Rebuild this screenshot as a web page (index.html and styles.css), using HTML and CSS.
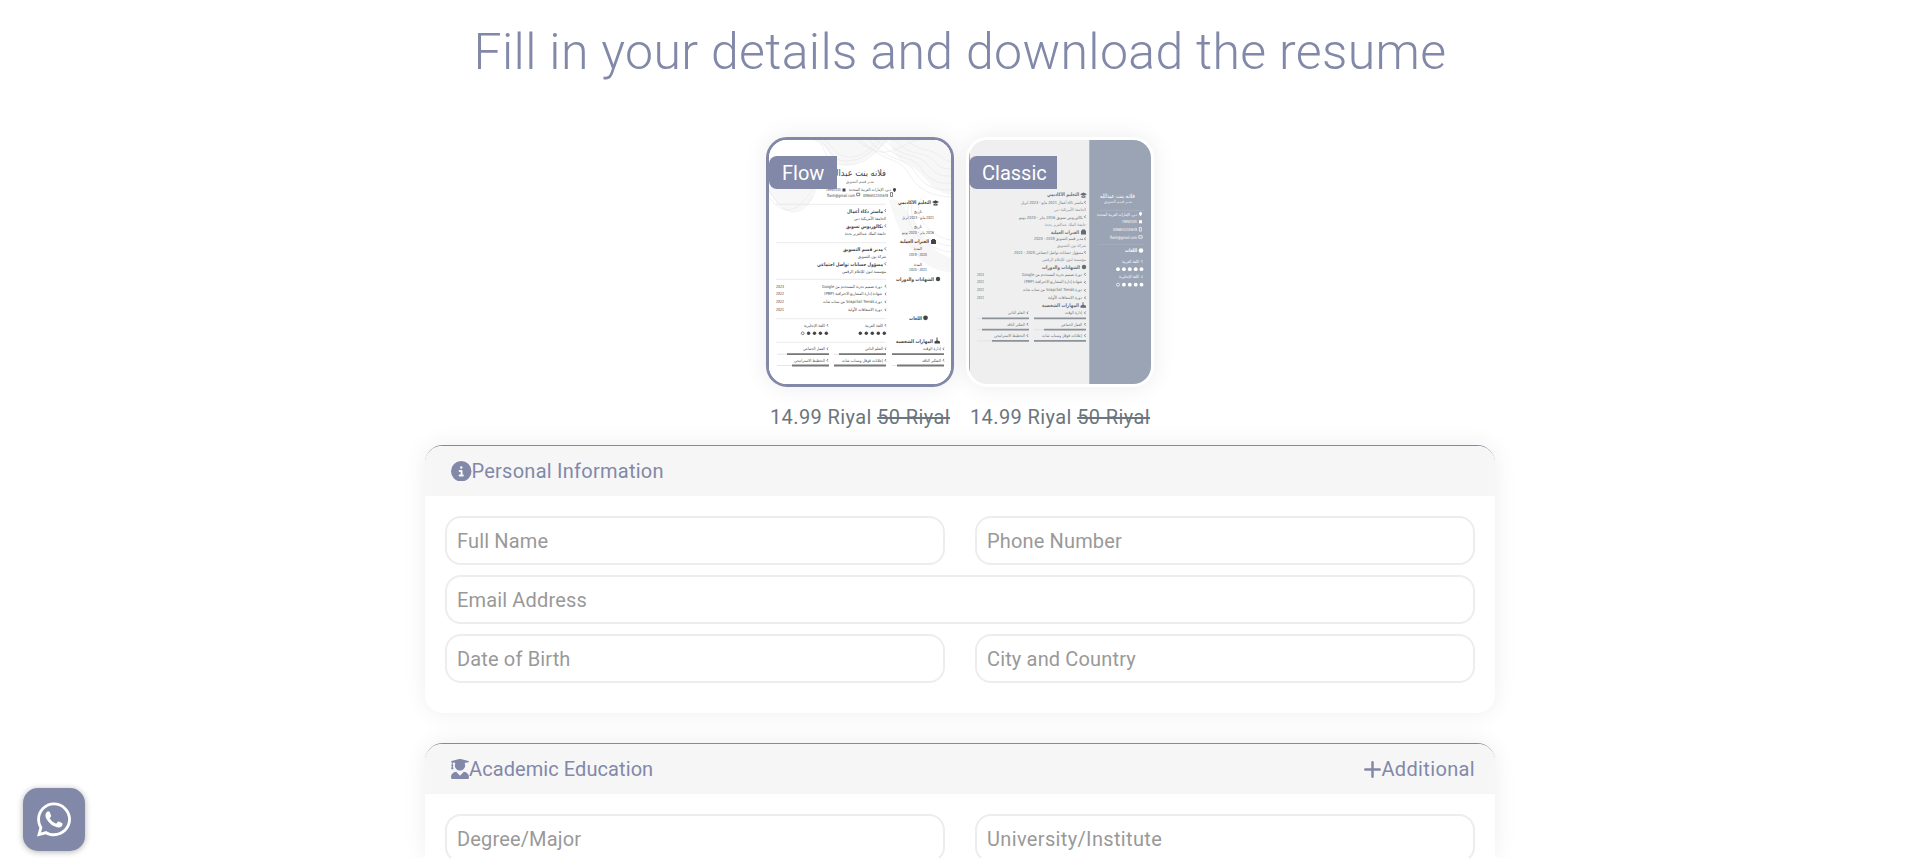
FILE: index.html
```html
<!DOCTYPE html>
<html lang="en">
<head>
<meta charset="utf-8">
<title>Resume Builder</title>
<link rel="stylesheet" href="styles.css">
</head>
<body>
<main class="page">
  <h1 class="title">Fill in your details and download the resume</h1>

  <section class="templates">
    <article class="template">
      <div class="thumb thumb-active">
        <span class="badge badge-flow">Flow</span>
        <svg class="sheet" viewBox="0 0 182 244">
          <rect width="182" height="244" fill="#fff"/>
          <path d="M48 0C60 8 62 22 76 25S112 8 120 0ZM120 0C130 30 140 20 152 34S168 52 182 55V0ZM0 52C18 82 36 70 44 58S50 30 0 48ZM120 60C138 52 150 110 182 118V132C160 132 136 116 120 60Z" fill="#f7f7f8"/>
          <g fill="none" stroke="#e9e9eb" stroke-width=".7">
            <path d="M46 0C60 6 52 24 76 25S112 6 116 0M50 0C62 7 60 21 78 21S108 6 112 0M56 0C64 7 66 16 80 17S104 6 108 0M88 0C108 16 118 14 134 6S150 0 152 0M92 0C116 24 130 16 140 34S166 56 182 57M100 0C122 24 136 16 146 32S168 50 182 50M108 0C128 22 142 14 152 28S170 44 182 43M116 0C134 20 148 12 158 24S172 36 182 36M126 0C142 18 154 10 164 20S174 28 182 29M138 0C150 12 160 8 168 14S176 20 182 22M0 50C18 84 38 72 43 56M0 57C18 82 34 68 50 38M140 62C132 90 160 110 182 112M144 60C136 84 160 104 182 106M152 58C142 78 164 98 182 100"/>
          </g>
          <circle cx="103" cy="39" r="19" fill="#fff"/>
          <path d="M7 64.300H117M7 102.700H117M7 139.300H117M7 178.700H117M7 202.300H117" stroke="#e6e6e6" stroke-width=".8"/>
          <g class="ink">
            <text class="name" x="117" y="36" textLength="57" lengthAdjust="spacingAndGlyphs">فلانه بنت عبدالله</text>
            <text class="soft" x="105" y="42.500" textLength="28" lengthAdjust="spacingAndGlyphs">مدير قسم التسويق</text>
            <text x="122" y="51" textLength="42" lengthAdjust="spacingAndGlyphs">دبي، الإمارات العربية المتحدة</text>
            <text class="ltr" x="57" y="51" textLength="15" lengthAdjust="spacingAndGlyphs">1999/01/01</text>
            <text class="ltr" x="58" y="56.500" textLength="28" lengthAdjust="spacingAndGlyphs">flanh@gmail.com</text>
            <text class="ltr" x="94" y="56.500" textLength="25" lengthAdjust="spacingAndGlyphs">00966512345678</text>
            <path d="M125.500 48a1.600 1.600 0 0 1 1.600 1.600q0 1-1.600 2.600q-1.600-1.600-1.600-2.600a1.600 1.600 0 0 1 1.600-1.600ZM73.500 48.500h3v3h-3Z"/>
            <path class="line" d="M87.700 53.200h3v2.500h-3ZM121.500 52.500h2v4h-2Z"/>

            <text class="head" x="162" y="64" textLength="33" lengthAdjust="spacingAndGlyphs">التعليم الاكاديمي</text>
            <path d="M163 62l3.500-1.800L170 62l-3.500 1.800ZM164.500 63.500l2 1 2-1v2h-4Z"/>
            <text x="153" y="73" textLength="8" lengthAdjust="spacingAndGlyphs">تاريخ</text>
            <text x="165" y="78.500" textLength="32" lengthAdjust="spacingAndGlyphs">2021 مايو - 2023 ابريل</text>
            <text x="153" y="88" textLength="8" lengthAdjust="spacingAndGlyphs">تاريخ</text>
            <text x="165" y="93.500" textLength="32" lengthAdjust="spacingAndGlyphs">2016 يناير - 2020 يونيو</text>
            <text class="head" x="160" y="102.500" textLength="29" lengthAdjust="spacingAndGlyphs">الخبرات العملية</text>
            <path d="M162 100h1v-1h3v1h1v4h-5Z"/>
            <text x="153" y="110" textLength="8" lengthAdjust="spacingAndGlyphs">المدة</text>
            <text x="158" y="115.500" textLength="18" lengthAdjust="spacingAndGlyphs">2020 - 2019</text>
            <text x="153" y="125.500" textLength="8" lengthAdjust="spacingAndGlyphs">المدة</text>
            <text x="158" y="131" textLength="18" lengthAdjust="spacingAndGlyphs">2021 - 2020</text>
            <text class="head" x="165" y="140.500" textLength="38" lengthAdjust="spacingAndGlyphs">الشهادات والدورات</text>
            <circle cx="169" cy="139" r="2.200"/>
            <text class="head" x="153" y="179.500" textLength="13" lengthAdjust="spacingAndGlyphs">اللغات</text>
            <circle cx="156.500" cy="177.800" r="2.400"/>
            <text class="head" x="164" y="202.500" textLength="37" lengthAdjust="spacingAndGlyphs">المهارات الشخصية</text>
            <path d="M165.500 203.500v-2l2-1v-3h1v3l2.500 1v2Z"/>

            <text class="head" x="114" y="72.500" textLength="36" lengthAdjust="spacingAndGlyphs">ماستر ذكاء أعمال</text>
            <text x="117" y="79.800" textLength="32" lengthAdjust="spacingAndGlyphs">الجامعة الأمريكية دبي</text>
            <text class="head" x="114" y="87.500" textLength="37" lengthAdjust="spacingAndGlyphs">بكالوريوس تسويق</text>
            <text x="117" y="94.500" textLength="41" lengthAdjust="spacingAndGlyphs">جامعة الملك عبدالعزيز بجدة</text>
            <text class="head" x="114" y="110.500" textLength="40" lengthAdjust="spacingAndGlyphs">مدير قسم التسويق</text>
            <text x="117" y="117.500" textLength="28" lengthAdjust="spacingAndGlyphs">شركة نون للتسويق</text>
            <text class="head" x="114" y="125.500" textLength="66" lengthAdjust="spacingAndGlyphs">مسؤول حسابات تواصل اجتماعي</text>
            <text x="117" y="132.500" textLength="44" lengthAdjust="spacingAndGlyphs">مؤسسة لنون للإعلام الرقمي</text>
            <path class="line" d="M117 69l-1.300 1.500 1.300 1.500M117 84.300l-1.300 1.500 1.300 1.500M117 107.300l-1.300 1.500 1.300 1.500M117 122.300l-1.300 1.500 1.300 1.500"/>

            <text x="113" y="147.500" textLength="60" lengthAdjust="spacingAndGlyphs">دورة تصميم تجربة المستخدم من Google</text>
            <text x="113" y="155.300" textLength="58" lengthAdjust="spacingAndGlyphs">شهادة إدارة المشاريع الاحترافية (PMP)</text>
            <text x="113" y="163" textLength="59" lengthAdjust="spacingAndGlyphs">دورة Snapchat Trends من سناب شات</text>
            <text x="113" y="171" textLength="34" lengthAdjust="spacingAndGlyphs">دورة الاسعافات الأولية</text>
            <text class="ltr" x="7" y="147.500" textLength="8" lengthAdjust="spacingAndGlyphs">2023</text>
            <text class="ltr" x="7" y="155.300" textLength="8" lengthAdjust="spacingAndGlyphs">2022</text>
            <text class="ltr" x="7" y="163" textLength="8" lengthAdjust="spacingAndGlyphs">2022</text>
            <text class="ltr" x="7" y="171" textLength="8" lengthAdjust="spacingAndGlyphs">2021</text>
            <path class="line" d="M117 145l-1 1.300 1 1.300M117 152.700l-1 1.300 1 1.300M117 160.500l-1 1.300 1 1.300M117 168.500l-1 1.300 1 1.300M117 184l-1 1.300 1 1.300M59 184l-1 1.300 1 1.300"/>

            <text x="114" y="186.500" textLength="18" lengthAdjust="spacingAndGlyphs">اللغة العربية</text>
            <text x="56" y="186.500" textLength="21" lengthAdjust="spacingAndGlyphs">اللغة الإنجليزية</text>
            <g><circle cx="91.300" cy="193.300" r="1.700"/><circle cx="97.300" cy="193.300" r="1.700"/><circle cx="103.300" cy="193.300" r="1.700"/><circle cx="109.300" cy="193.300" r="1.700"/><circle cx="115.300" cy="193.300" r="1.700"/><circle cx="39.600" cy="193.300" r="1.700"/><circle cx="45.500" cy="193.300" r="1.700"/><circle cx="51.400" cy="193.300" r="1.700"/><circle cx="57.300" cy="193.300" r="1.700"/><circle class="line" cx="33.700" cy="193.300" r="1.400"/></g>

            <text x="172" y="210" textLength="18" lengthAdjust="spacingAndGlyphs">إدارة الوقت</text>
            <text x="114" y="210" textLength="18" lengthAdjust="spacingAndGlyphs">التعلم الذاتي</text>
            <text x="56" y="210" textLength="22" lengthAdjust="spacingAndGlyphs">العمل الجماعي</text>
            <text x="172" y="221.500" textLength="19" lengthAdjust="spacingAndGlyphs">التفكير الناقد</text>
            <text x="114" y="221.500" textLength="41" lengthAdjust="spacingAndGlyphs">إعلانات قوقل وسناب شات</text>
            <text x="56" y="221.500" textLength="31" lengthAdjust="spacingAndGlyphs">التخطيط الاستراتيجي</text>
            <path class="line" d="M175 207.500l-1 1.300 1 1.300M117 207.500l-1 1.300 1 1.300M59 207.500l-1 1.300 1 1.300M175 219l-1 1.300 1 1.300M117 219l-1 1.300 1 1.300M59 219l-1 1.300 1 1.300"/>
          </g>
          <path d="M8 214.200h52M65 214.200h52M8 225.500h52M123 225.500h52" stroke="#e6e6e6" stroke-width="1"/>
          <path d="M123 214.200h52M70 214.200h47M18 214.200h42M128 225.500h47M65 225.500h52M23 225.500h37" stroke="#777" stroke-width="1.800"/>
        </svg>
      </div>
      <p class="price">14.99 Riyal <s>50 Riyal</s></p>
    </article>

    <article class="template">
      <div class="thumb">
        <span class="badge badge-classic">Classic</span>
        <svg class="sheet" viewBox="0 0 182 244">
          <rect width="182" height="244" fill="#efefef"/>
          <rect width=".8" height="244" fill="#8d97a6"/>
          <rect x="120" width="62" height="244" fill="#9aa4b5"/>
          <rect x="120" width="1" height="244" fill="#b0b8c5"/>
          <g transform="translate(-6 0)">
          <g class="ink ink-slate">
            <text class="head" x="116" y="56.300" textLength="32" lengthAdjust="spacingAndGlyphs">التعليم الاكاديمي</text>
            <path d="M117 54.300l3.500-1.800 3.500 1.800-3.500 1.800ZM118.500 55.800l2 1 2-1v2h-4Z"/>
            <text x="120" y="64.300" textLength="62" lengthAdjust="spacingAndGlyphs">ماستر ذكاء أعمال 2021 مايو - 2023 ابريل</text>
            <text class="soft" x="123" y="71.300" textLength="32" lengthAdjust="spacingAndGlyphs">الجامعة الأمريكية دبي</text>
            <text x="120" y="78.500" textLength="64" lengthAdjust="spacingAndGlyphs">بكالوريوس تسويق 2016 يناير - 2020 يونيو</text>
            <text class="soft" x="123" y="85.500" textLength="41" lengthAdjust="spacingAndGlyphs">جامعة الملك عبدالعزيز بجدة</text>
            <text class="head" x="116" y="93.500" textLength="28" lengthAdjust="spacingAndGlyphs">الخبرات العملية</text>
            <path d="M118 90.500h1v-1h3v1h1v4h-5Z"/>
            <text x="120" y="100.300" textLength="49" lengthAdjust="spacingAndGlyphs">مدير قسم التسويق 2019 - 2020</text>
            <text class="soft" x="123" y="107" textLength="29" lengthAdjust="spacingAndGlyphs">شركة نون للتسويق</text>
            <text x="120" y="114" textLength="69" lengthAdjust="spacingAndGlyphs">مسؤول حسابات تواصل اجتماعي 2020 - 2021</text>
            <text class="soft" x="123" y="120.800" textLength="44" lengthAdjust="spacingAndGlyphs">مؤسسة لنون للإعلام الرقمي</text>
            <text class="head" x="117" y="128.500" textLength="38" lengthAdjust="spacingAndGlyphs">الشهادات والدورات</text>
            <circle cx="121" cy="127" r="2.200"/>
            <text x="119" y="135.500" textLength="60" lengthAdjust="spacingAndGlyphs">دورة تصميم تجربة المستخدم من Google</text>
            <text x="119" y="143.200" textLength="58" lengthAdjust="spacingAndGlyphs">شهادة إدارة المشاريع الاحترافية (PMP)</text>
            <text x="119" y="151" textLength="59" lengthAdjust="spacingAndGlyphs">دورة Snapchat Trends من سناب شات</text>
            <text x="119" y="158.700" textLength="34" lengthAdjust="spacingAndGlyphs">دورة الاسعافات الأولية</text>
            <text class="ltr" x="14" y="135.500" textLength="7" lengthAdjust="spacingAndGlyphs">2023</text>
            <text class="ltr" x="14" y="143.200" textLength="7" lengthAdjust="spacingAndGlyphs">2022</text>
            <text class="ltr" x="14" y="151" textLength="7" lengthAdjust="spacingAndGlyphs">2022</text>
            <text class="ltr" x="14" y="158.700" textLength="7" lengthAdjust="spacingAndGlyphs">2021</text>
            <text class="head" x="116" y="167" textLength="37" lengthAdjust="spacingAndGlyphs">المهارات الشخصية</text>
            <path d="M117.500 167.800v-2l2-1v-2.500h1v2.500l2.500 1v2Z"/>
            <text x="119" y="174.300" textLength="17" lengthAdjust="spacingAndGlyphs">إدارة الوقت</text>
            <text x="62" y="174.300" textLength="17" lengthAdjust="spacingAndGlyphs">التعلم الذاتي</text>
            <text x="119" y="185.500" textLength="21" lengthAdjust="spacingAndGlyphs">العمل الجماعي</text>
            <text x="62" y="185.500" textLength="18" lengthAdjust="spacingAndGlyphs">التفكير الناقد</text>
            <text x="119" y="196.800" textLength="40" lengthAdjust="spacingAndGlyphs">إعلانات قوقل وسناب شات</text>
            <text x="62" y="196.800" textLength="31" lengthAdjust="spacingAndGlyphs">التخطيط الاستراتيجي</text>
            <path class="line" d="M122.500 61l-1 1.300 1 1.300M122.500 75.500l-1 1.300 1 1.300M122.500 97.500l-1 1.300 1 1.300M122.500 111l-1 1.300 1 1.300M122.500 133l-1 1.300 1 1.300M122.500 141l-1 1.300 1 1.300M122.500 149l-1 1.300 1 1.300M122.500 156.500l-1 1.300 1 1.300M122.500 171.500l-1 1.300 1 1.300M65 171.500l-1 1.300 1 1.300M122.500 183l-1 1.300 1 1.300M65 183l-1 1.300 1 1.300M122.500 194.300l-1 1.300 1 1.300M65 194.300l-1 1.300 1 1.300"/>
          </g>
          <path d="M14 178.400h52M14 189.700h52M71 189.700h52M14 200.900h52" stroke="#e2e2e2" stroke-width="1"/>
          <path d="M71 178.400h52M19 178.400h47M81 189.700h42M19 189.700h47M71 200.900h52M29 200.900h37" stroke="#8c9299" stroke-width="1.800"/>
          <g class="ink ink-white">
            <text class="name-small" x="172" y="57.500" textLength="35" lengthAdjust="spacingAndGlyphs">فلانه بنت عبدالله</text>
            <text class="soft" x="169" y="62.800" textLength="28" lengthAdjust="spacingAndGlyphs">مدير قسم التسويق</text>
            <path d="M136 70.300H181M136 104.300H181" stroke="#a9b2c0" stroke-width=".7"/>
            <text x="174" y="75.500" textLength="40" lengthAdjust="spacingAndGlyphs">دبي، الإمارات العربية المتحدة</text>
            <text class="ltr" x="159" y="83" textLength="15" lengthAdjust="spacingAndGlyphs">1999/01/01</text>
            <text class="ltr" x="150" y="90.700" textLength="24" lengthAdjust="spacingAndGlyphs">00966512345678</text>
            <text class="ltr" x="147" y="98.500" textLength="27" lengthAdjust="spacingAndGlyphs">flanh@gmail.com</text>
            <path d="M177.500 72a1.600 1.600 0 0 1 1.600 1.600q0 1-1.600 2.600q-1.600-1.600-1.600-2.600a1.600 1.600 0 0 1 1.600-1.600ZM176 80.200h3v3h-3Z"/>
            <path class="line" d="M176.400 87.500h2v3.600h-2ZM175.800 95.700h3.400v2.500h-3.400Z"/>
            <text class="head" x="174" y="112" textLength="12" lengthAdjust="spacingAndGlyphs">اللغات</text>
            <circle cx="178" cy="110.500" r="2.300"/>
            <text x="176" y="122.500" textLength="17" lengthAdjust="spacingAndGlyphs">اللغة العربية</text>
            <text x="176" y="138" textLength="20" lengthAdjust="spacingAndGlyphs">اللغة الإنجليزية</text>
            <g><circle cx="155" cy="129.200" r="1.900"/><circle cx="160.900" cy="129.200" r="1.900"/><circle cx="166.800" cy="129.200" r="1.900"/><circle cx="172.700" cy="129.200" r="1.900"/><circle cx="178.500" cy="129.200" r="1.900"/><circle cx="160.900" cy="144.700" r="1.900"/><circle cx="166.800" cy="144.700" r="1.900"/><circle cx="172.700" cy="144.700" r="1.900"/><circle cx="178.500" cy="144.700" r="1.900"/><circle class="line" cx="155" cy="144.700" r="1.500"/></g>
            <path class="line" d="M179.500 120l-1 1.300 1 1.300M179.500 135.500l-1 1.300 1 1.300"/>
          </g>
          </g>
        </svg>
      </div>
      <p class="price">14.99 Riyal <s>50 Riyal</s></p>
    </article>
  </section>

  <form class="form">
    <section class="card">
      <header class="card-head">
        <div class="card-label">
          <svg class="icon-info" viewBox="0 0 512 512"><path d="M256 512A256 256 0 1 0 256 0a256 256 0 1 0 0 512zM216 336h24V272H216c-13.300 0-24-10.700-24-24s10.700-24 24-24h48c13.300 0 24 10.700 24 24v88h8c13.300 0 24 10.700 24 24s-10.700 24-24 24H216c-13.300 0-24-10.700-24-24s10.700-24 24-24zm40-208a32 32 0 1 1 0 64 32 32 0 1 1 0-64z"/></svg>
          <span class="label-personal">Personal Information</span>
        </div>
      </header>
      <div class="fields">
        <input class="field f-name" type="text" placeholder="Full Name">
        <input class="field f-phone" type="text" placeholder="Phone Number">
        <input class="field field-wide f-email" type="text" placeholder="Email Address">
        <input class="field f-birth" type="text" placeholder="Date of Birth">
        <input class="field f-city" type="text" placeholder="City and Country">
      </div>
    </section>

    <section class="card card-last">
      <header class="card-head">
        <div class="card-label">
          <svg class="icon-grad" viewBox="0 0 448 512"><path d="M319.400 320.600L224 416l-95.400-95.400C57.100 323.700 0 382.200 0 454.400v9.600c0 26.500 21.500 48 48 48h352c26.500 0 48-21.500 48-48v-9.600c0-72.200-57.100-130.700-128.600-133.800zM13.600 79.800l6.400 1.500v58.400c-7 4.200-12 11.500-12 20.300 0 8.400 4.600 15.400 11.100 19.700L3.500 242c-1.700 6.900 2.100 14 7.600 14h41.800c5.500 0 9.300-7.100 7.600-14l-15.600-62.300C51.400 175.400 56 168.400 56 160c0-8.800-5-16.100-12-20.300V87.100l66 15.900c-8.600 17.200-14 36.400-14 57 0 70.700 57.300 128 128 128s128-57.300 128-128c0-20.600-5.300-39.800-14-57l96.300-23.200c18.200-4.400 18.200-27.100 0-31.500l-190.400-46c-13-3.100-26.700-3.100-39.700 0L13.600 48.200c-18.100 4.400-18.100 27.200 0 31.600z"/></svg>
          <span class="label-academic">Academic Education</span>
        </div>
        <div class="card-action">
          <svg class="icon-plus" viewBox="0 0 17 17"><path d="M8.500 1.300V15.700M1.300 8.500H15.700"/></svg>
          <span class="label-add">Additional</span>
        </div>
      </header>
      <div class="fields">
        <input class="field f-degree" type="text" placeholder="Degree/Major">
        <input class="field f-uni" type="text" placeholder="University/Institute">
      </div>
    </section>
  </form>
</main>

<a class="whatsapp" href="#" aria-label="WhatsApp">
  <svg viewBox="0 0 448 512"><path d="M380.900 97.100C339 55.100 283.200 32 223.900 32c-122.400 0-222 99.600-222 222 0 39.100 10.200 77.300 29.600 111L0 480l117.700-30.900c32.400 17.700 68.900 27 106.100 27h.1c122.300 0 224.100-99.600 224.100-222 0-59.300-25.200-115-67.100-157zm-157 341.600c-33.200 0-65.700-8.900-94-25.700l-6.700-4-69.800 18.300L72 359.200l-4.400-7c-18.500-29.400-28.200-63.300-28.200-98.200 0-101.700 82.800-184.500 184.600-184.500 49.300 0 95.600 19.200 130.400 54.100 34.800 34.900 56.200 81.200 56.100 130.500 0 101.800-84.900 184.600-186.600 184.600zm101.200-138.200c-5.500-2.800-32.800-16.200-37.900-18-5.100-1.900-8.800-2.800-12.500 2.800-3.700 5.600-14.300 18-17.600 21.800-3.200 3.700-6.500 4.200-12 1.400-32.600-16.300-54-29.100-75.500-66-5.700-9.800 5.700-9.100 16.300-30.300 1.800-3.700.9-6.900-.5-9.700-1.400-2.800-12.500-30.100-17.100-41.200-4.500-10.800-9.100-9.300-12.500-9.500-3.200-.2-6.900-.2-10.600-.2-3.700 0-9.700 1.400-14.800 6.900-5.100 5.600-19.400 19-19.400 46.300 0 27.300 19.900 53.700 22.600 57.400 2.800 3.700 39.100 59.700 94.800 83.800 35.200 15.200 49 16.500 66.600 13.900 10.700-1.600 32.800-13.400 37.400-26.400 4.600-13 4.600-24.100 3.200-26.400-1.300-2.500-5-3.900-10.500-6.600z"/></svg>
</a>
</body>
</html>
```

FILE: styles.css
```css
:root {
  --accent: #8288a8;
  --muted: #6c757d;
}

* {
  box-sizing: border-box;
}

html,
body {
  margin: 0;
  background: #fff;
}

body {
  font-family: Roboto, "Open Sans", sans-serif;
  font-weight: 400;
  font-size: 20px;
  color: var(--accent);
}

.page {
  display: flex;
  flex-direction: column;
  align-items: center;
  height: 100vh;
  overflow: hidden;
  padding-left: 10px;
}

.title {
  flex: none;
  margin: 15px 0 0;
  height: 75px;
  line-height: 75px;
  font-size: 50px;
  font-weight: 300;
  letter-spacing: 0.35px;
  white-space: nowrap;
}

.templates {
  flex: none;
  display: flex;
  gap: 12px;
  margin-top: 47px;
}

.template {
  width: 188px;
}

.thumb {
  position: relative;
  height: 250px;
  border: 3px solid #fff;
  border-radius: 21px;
  box-shadow: 0 0 24px rgba(0, 0, 0, 0.08);
  background: #fff;
}

.thumb-active {
  border-color: var(--accent);
}

.sheet {
  display: block;
  width: 182px;
  height: 244px;
  border-radius: 18px;
}

.badge {
  position: absolute;
  left: 0;
  top: 16px;
  height: 33px;
  padding-left: 13px;
  line-height: 35px;
  border-radius: 8px 0 0 8px;
  background: var(--accent);
  color: #fff;
}

.badge-flow {
  width: 68px;
}

.badge-classic {
  width: 88px;
}

.ink {
  fill: #444;
  font-family: "DejaVu Sans", sans-serif;
  font-size: 4.2px;
  font-weight: 400;
  direction: rtl;
}

.ink-slate {
  fill: #646b75;
}

.ink-white {
  fill: #fff;
}

.ink .ltr {
  direction: ltr;
}

.ink .soft {
  opacity: 0.75;
}

.ink .head {
  font-size: 5px;
  font-weight: 700;
}

.ink .name {
  font-size: 9px;
}

.ink .name-small {
  font-size: 6px;
}

.ink .line {
  fill: none;
  stroke: #555;
  stroke-width: 0.7;
}

.ink-white .line {
  stroke: #fff;
}

.price {
  margin: 15px 0 0;
  height: 30px;
  line-height: 30px;
  text-align: center;
  color: var(--muted);
  letter-spacing: 0.4px;
  white-space: nowrap;
}

.form {
  flex: none;
  display: flex;
  flex-direction: column;
  gap: 30px;
  width: 1070px;
  margin-top: 13px;
}

.card {
  height: 268px;
  border-top: 1px solid var(--accent);
  border-radius: 18px;
  background: #fff;
  box-shadow: 0 0 24px rgba(0, 0, 0, 0.07);
}

.card-last {
  height: 115px;
  border-radius: 18px 18px 0 0;
}

.card-head {
  display: flex;
  justify-content: space-between;
  align-items: center;
  height: 50px;
  padding: 0 20px 0 26px;
  border-radius: 17px 17px 0 0;
  background: #f6f6f6;
}

.card-last .fields {
  height: 64px;
  padding-bottom: 0;
  overflow: hidden;
}

.card-label,
.card-action {
  display: flex;
  align-items: center;
  line-height: 30px;
  white-space: nowrap;
}

.label-personal {
  letter-spacing: 0.25px;
}

.label-academic {
  letter-spacing: 0.08px;
}

.label-add {
  letter-spacing: 0.35px;
}

.icon-info {
  width: 20.500px;
  height: 20.500px;
  fill: var(--accent);
}

.icon-grad {
  width: 18px;
  height: 20.500px;
  fill: var(--accent);
}

.icon-plus {
  width: 17px;
  height: 17px;
  fill: none;
  stroke: var(--accent);
  stroke-width: 2.500;
  stroke-linecap: round;
}

.fields {
  display: grid;
  grid-template-columns: 1fr 1fr;
  gap: 10px 30px;
  padding: 20px;
}

.field {
  width: 100%;
  height: 49px;
  padding: 0 10px;
  border: 2px solid #ededed;
  border-radius: 16px;
  background: #fff;
  outline: none;
  font: inherit;
  letter-spacing: 0.15px;
}

.f-uni {
  letter-spacing: 0.35px;
}

.field::placeholder {
  color: #999;
  opacity: 1;
}

.field-wide {
  grid-column: span 2;
}

.whatsapp {
  position: fixed;
  left: 23px;
  top: 788px;
  display: flex;
  align-items: center;
  justify-content: center;
  width: 62px;
  height: 63px;
  border-radius: 15px;
  background: var(--accent);
  box-shadow: 0 1px 6px rgba(0, 0, 0, 0.3);
}

.whatsapp svg {
  width: 34px;
  height: 39px;
  fill: #fff;
}
```
